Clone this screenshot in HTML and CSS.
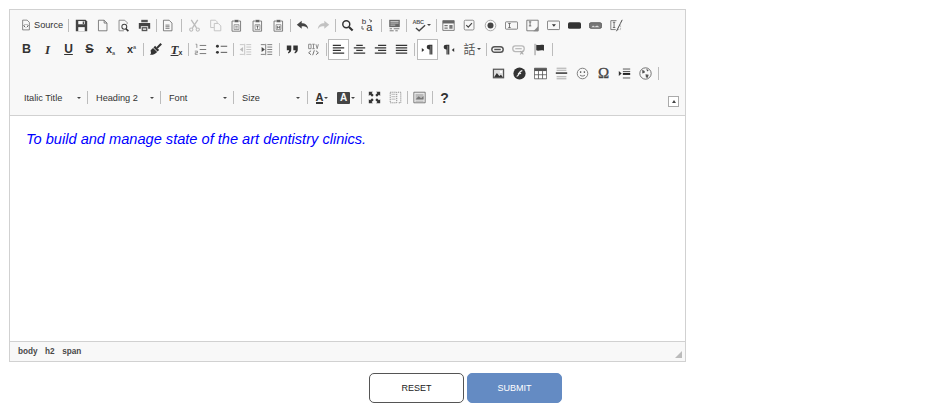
FILE: index.html
```html
<!DOCTYPE html>
<html lang="en">
<head>
<meta charset="utf-8">
<title>Editor</title>
<link rel="stylesheet" href="styles.css">
</head>
<body>
<svg class="defs" width="0" height="0" aria-hidden="true">
  <defs>
    <symbol id="source" viewBox="0 0 16 16"><path d="M3.500 1.500h6l3 3v10h-9z" fill="none" stroke="#666"/><path d="M7 7L5 9l2 2M9 7l2 2-2 2" fill="none" stroke="#333"/></symbol>
    <symbol id="save" viewBox="0 0 16 16"><path d="M1 1h12l2 2v12H1z" fill="#444"/><path d="M4 2.500h8v4H4z" fill="#f8f8f8"/><path d="M4 10h8v5H4z" fill="#f8f8f8"/><path d="M9.500 3H11v3H9.500z" fill="#444"/></symbol>
    <symbol id="new" viewBox="0 0 16 16"><path d="M3 1.500h7l3.500 3.500v9.500H3z M10 1.500V5h3.500" fill="none" stroke="#666"/></symbol>
    <symbol id="preview" viewBox="0 0 16 16"><path d="M12.500 6V4.500l-3-3h-7v13h6" fill="none" stroke="#777"/><circle cx="9" cy="9.500" r="3" fill="none" stroke="#444" stroke-width="1.300"/><path d="M11 12l3 3" stroke="#333" stroke-width="2"/></symbol>
    <symbol id="print" viewBox="0 0 16 16"><path d="M4 1h8v3H4z" fill="#555"/><path d="M1 5h14v7h-2.500V9h-9v3H1z" fill="#444"/><path d="M4.500 10h7v5h-7z" fill="#555"/><path d="M6 11.500h4v2H6z" fill="#ddd"/></symbol>
    <symbol id="templates" viewBox="0 0 16 16"><path d="M3 1.500h7l3.500 3.500v9.500H3z" fill="none" stroke="#666"/><path d="M5.500 7.500h5M5.500 9.500h5M5.500 11.500h5" stroke="#666"/></symbol>
    <symbol id="cut" viewBox="0 0 16 16"><g opacity=".3"><path d="M4 1l6.500 10M12 1L5.500 11" stroke="#333" stroke-width="1.600"/><circle cx="4" cy="13" r="2" fill="none" stroke="#333" stroke-width="1.300"/><circle cx="12" cy="13" r="2" fill="none" stroke="#333" stroke-width="1.300"/></g></symbol>
    <symbol id="copy" viewBox="0 0 16 16"><g opacity=".3" fill="none" stroke="#333"><path d="M2 1.500h6l2 2V5M2 1.500v9h4"/><path d="M6.500 5.500h5l3 3v6h-8z"/></g></symbol>
    <symbol id="paste" viewBox="0 0 16 16"><path d="M5 2.500H2.500V15H13V2.500h-2" fill="none" stroke="#666"/><path d="M5.500 1h5v3h-5z" fill="#666"/><path d="M5 7h6v6H5z" fill="none" stroke="#888"/><path d="M6.500 9h3M6.500 11h3" stroke="#777"/></symbol>
    <symbol id="pastetext" viewBox="0 0 16 16"><path d="M5 2.500H2.500V15H13V2.500h-2" fill="none" stroke="#666"/><path d="M5.500 1h5v3h-5z" fill="#666"/><path d="M5 7h6v6H5z" fill="none" stroke="#888"/><path d="M6.500 8.700h3M8 8.700V12" stroke="#555"/></symbol>
    <symbol id="pasteword" viewBox="0 0 16 16"><path d="M5 2.500H2.500V15H13V2.500h-2" fill="none" stroke="#666"/><path d="M5.500 1h5v3h-5z" fill="#666"/><path d="M5 7h6v6H5z" fill="none" stroke="#888"/><path d="M6.500 8.500V12M9.500 8.500V12M6.500 10.200h3" stroke="#555"/></symbol>
    <symbol id="undo" viewBox="0 0 16 16"><path d="M1 7l6-5v3.200c4.500 0 7.500 2.300 8 7.300-1.500-2.800-4-3.500-8-3.500V12z" fill="#444"/></symbol>
    <symbol id="redo" viewBox="0 0 16 16"><path d="M15 7L9 2v3.200c-4.500 0-7.500 2.300-8 7.300 1.500-2.800 4-3.500 8-3.500V12z" fill="#444" opacity=".3"/></symbol>
    <symbol id="find" viewBox="0 0 16 16"><circle cx="6.500" cy="6.500" r="4.300" fill="none" stroke="#333" stroke-width="1.800"/><path d="M9.800 9.800l4.500 4.500" stroke="#333" stroke-width="2.600"/></symbol>
    <symbol id="selectall" viewBox="0 0 16 16"><path d="M1.500 1h13v9h-13z" fill="#666"/><path d="M3 3h10M3 5h10M3 7.500h6" stroke="#ddd"/><path d="M2 12h3M7 12h7M2 14.500h5M9 14.500h3" stroke="#777" stroke-width="1.200"/></symbol>
    <symbol id="check" viewBox="0 0 16 16"><path d="M3 1.500h9A1.500 1.500 0 0 1 13.500 3v9a1.500 1.500 0 0 1-1.500 1.500H3A1.500 1.500 0 0 1 1.500 12V3A1.500 1.500 0 0 1 3 1.500z" fill="none" stroke="#777"/><path d="M4 7.500L6.500 10 11 5" fill="none" stroke="#444" stroke-width="1.400"/></symbol>
    <symbol id="form" viewBox="0 0 16 16"><path d="M1 2h14v12H1z" fill="none" stroke="#666"/><path d="M1 2h14v3.500H1z" fill="#666"/><path d="M3 7.500h4V9H3zM9 7.500h4V12H9zM3 10.500h4V12H3z" fill="#777"/></symbol>
    <symbol id="radio" viewBox="0 0 16 16"><circle cx="8" cy="8" r="6.500" fill="none" stroke="#999"/><circle cx="8" cy="8" r="3.700" fill="#444"/></symbol>
    <symbol id="textfield" viewBox="0 0 16 16"><rect x=".5" y="3.500" width="15" height="9" rx="1" fill="none" stroke="#666"/><path d="M4 5.500h3M4 10.500h3M5.500 5.500v5" stroke="#555"/></symbol>
    <symbol id="textarea" viewBox="0 0 16 16"><path d="M1 1.500h14v13H1z" fill="none" stroke="#666"/><path d="M3.500 3.500h3M3.500 8.500h3M5 3.500v5" stroke="#555"/><path d="M15 9v6H9z" fill="#888"/></symbol>
    <symbol id="select" viewBox="0 0 16 16"><rect x=".5" y="2.500" width="15" height="10.500" rx="1" fill="none" stroke="#666"/><path d="M6 6.500h5L8.500 9.500z" fill="#333"/></symbol>
    <symbol id="button" viewBox="0 0 16 16"><rect x="0" y="4" width="16" height="8" rx="2" fill="#333"/></symbol>
    <symbol id="imagebutton" viewBox="0 0 16 16"><rect x=".5" y="4.500" width="15" height="7" rx="2" fill="#777" stroke="#555"/><path d="M3 10l2-2 2 1.500L10 8l3 2" fill="#ddd"/></symbol>
    <symbol id="hidden" viewBox="0 0 16 16"><path d="M8 2H1v11h6" fill="none" stroke="#666"/><path d="M3.500 4h3M3.500 10.500h3M5 4v6.500" stroke="#555"/><path d="M15 1L8 15" stroke="#444" stroke-width="1.200"/><path d="M13 5v8h-3" fill="none" stroke="#999" stroke-dasharray="1 1"/></symbol>
    <symbol id="brush" viewBox="0 0 16 16"><path d="M10 6l5-5" stroke="#333" stroke-width="2.600"/><path d="M7.500 3.500l5 5-2 2-5-5z" fill="#333"/><path d="M5 6l5 5c-1.500 2-5 4-9 3.500 2.500-1.500 1-3 1-5.500z" fill="#333"/></symbol>
    <symbol id="ol" viewBox="0 0 16 16"><path d="M7 3h8M7 8h8M7 13h8" stroke="#777" stroke-width="1.200"/><path d="M2 1.500h1.500V6M1 10h3.300v2H1.500v2h3" fill="none" stroke="#777" stroke-width=".9"/></symbol>
    <symbol id="ul" viewBox="0 0 16 16"><path d="M7 4h8M7 11.500h8" stroke="#555" stroke-width="1.200"/><circle cx="3" cy="4" r="1.800" fill="#333"/><circle cx="3" cy="11.500" r="1.800" fill="#333"/></symbol>
    <symbol id="outdent" viewBox="0 0 16 16"><g opacity=".3"><path d="M9 2h6M9 5h6M9 8h6M9 11h6M9 14h6M1 2h5M1 14h5M7 1v14" stroke="#333"/><path d="M1 8l4-3v6z" fill="#333"/></g></symbol>
    <symbol id="indent" viewBox="0 0 16 16"><path d="M9 2h6M9 5h6M9 8h6M9 11h6M9 14h6M1 2h5M1 14h5M7 1v14" stroke="#666"/><path d="M6 8L2 5v6z" fill="#444"/></symbol>
    <symbol id="quote" viewBox="0 0 16 16"><path d="M1 3h5.500v5c0 2.500-1.500 4-3.500 5l-.7-1.300c1-.7 1.500-1.500 1.500-2.700H1zM9 3h5.500v5c0 2.500-1.500 4-3.500 5l-.7-1.300c1-.7 1.500-1.500 1.500-2.700H9z" fill="#333"/></symbol>
    <symbol id="div" viewBox="0 0 16 16"><path d="M2 1.500h3V7H2zM6.500 1.500h3M8 1.500V7M6.500 7h3M11 1.500L12.500 7 14 1.500" fill="none" stroke="#777"/><path d="M5 9.500L2 12l3 2.500M11 9.500l3 2.500-3 2.500M9 9l-2 6" fill="none" stroke="#555"/></symbol>
    <symbol id="aleft" viewBox="0 0 16 16"><path d="M1 3h10M1 6h14M1 9h10M1 12.500h14" stroke="#333" stroke-width="1.400"/></symbol>
    <symbol id="acenter" viewBox="0 0 16 16"><path d="M4 3h8M1 6h14M4 9h8M1 12.500h14" stroke="#333" stroke-width="1.400"/></symbol>
    <symbol id="aright" viewBox="0 0 16 16"><path d="M5 3h10M1 6h14M5 9h10M1 12.500h14" stroke="#333" stroke-width="1.400"/></symbol>
    <symbol id="ajust" viewBox="0 0 16 16"><path d="M1 3h14M1 6h14M1 9h14M1 12.500h14" stroke="#333" stroke-width="1.400"/></symbol>
    <symbol id="ltr" viewBox="0 0 16 16"><path d="M1 6l3 2.500L1 11z" fill="#333"/><path d="M14 2H10a3 3 0 0 0 0 6h.5v6H12V3.500h.500V14H14z" fill="#333"/></symbol>
    <symbol id="rtl" viewBox="0 0 16 16"><path d="M15 6l-3 2.500 3 2.500z" fill="#333"/><path d="M9 2H5a3 3 0 0 0 0 6h.5v6H7V3.500h.500V14H9z" fill="#333"/></symbol>
    <symbol id="link" viewBox="0 0 16 16"><rect x="1" y="4.500" width="14" height="7" rx="3.500" fill="none" stroke="#555" stroke-width="1.800"/><path d="M4 8h8" stroke="#555" stroke-width="1.800"/></symbol>
    <symbol id="unlink" viewBox="0 0 16 16"><g opacity=".35"><rect x="1" y="3.500" width="14" height="7" rx="3" fill="none" stroke="#444" stroke-width="1.600"/><path d="M4 7h8" stroke="#444" stroke-width="1.500"/></g><path d="M10 10l4 4M14 10l-4 4" stroke="#aaa" stroke-width="1.300"/></symbol>
    <symbol id="anchor" viewBox="0 0 16 16"><path d="M2.500 1v14" stroke="#777"/><path d="M4 2c3 1.500 5-1 9.500.5v7C9 8 7 10.500 4 9z" fill="#333"/></symbol>
    <symbol id="image" viewBox="0 0 16 16"><path d="M1 2h14v12H1z" fill="#555"/><path d="M2.500 3.500h11v9h-11z" fill="#ddd"/><circle cx="11" cy="6" r="1.500" fill="#fff"/><path d="M2.500 12.500l3.500-5 3 3.500 2-1.500 2.500 3z" fill="#333"/></symbol>
    <symbol id="flash" viewBox="0 0 16 16"><circle cx="8" cy="8" r="7.500" fill="#333"/><path d="M4.500 11.500c3 0 2.500-7 7-7" fill="none" stroke="#eee" stroke-width="1.700"/><path d="M6 8h4" stroke="#eee" stroke-width="1.500"/></symbol>
    <symbol id="table" viewBox="0 0 16 16"><path d="M.5 1.500h15v13H.5z" fill="#fff" stroke="#555"/><path d="M.5 1.500h15V5H.5z" fill="#555"/><path d="M.5 9.500h15M5.500 5v9.500M10.500 5v9.500" stroke="#555"/></symbol>
    <symbol id="hr" viewBox="0 0 16 16"><path d="M2 1.500h12M2 4h12M2 12h12M2 14.500h12" stroke="#999"/><path d="M1 7.500h14" stroke="#444" stroke-width="2"/></symbol>
    <symbol id="smiley" viewBox="0 0 16 16"><circle cx="8" cy="8" r="6.500" fill="none" stroke="#666"/><circle cx="5.700" cy="6.300" r="1" fill="#444"/><circle cx="10.300" cy="6.300" r="1" fill="#444"/><path d="M5 10c1.500 1.500 4.500 1.500 6 0" fill="none" stroke="#555"/></symbol>
    <symbol id="pagebreak" viewBox="0 0 16 16"><path d="M1 5l3.500 3L1 11z" fill="#333"/><path d="M6 2.500h9M6 5.500h9M6 13.500h9" stroke="#555" stroke-width="1.200"/><path d="M6 8.500h9" stroke="#222" stroke-width="2.500"/></symbol>
    <symbol id="iframe" viewBox="0 0 16 16"><circle cx="8" cy="8" r="7" fill="none" stroke="#555"/><path d="M4 3.500L7 5v2l-3 1zM8 9l4 .5-1.500 4-2-1zM9 2l3 2-2 1.500z" fill="#555"/></symbol>
    <symbol id="blocks" viewBox="0 0 16 16"><path d="M1.500 1.500h8v13h-8zM11 1.500h3.500v13H11" fill="none" stroke="#777" stroke-dasharray="1.500 1"/><path d="M3 4h5M3 7h5M3 10h5" stroke="#aaa"/></symbol>
    <symbol id="showimg" viewBox="0 0 16 16"><path d="M1 1.500h14v13H1z" fill="#eee" stroke="#666"/><path d="M3 3.500h10v7H3z" fill="#bbb"/><path d="M3 10.500l4-4L10 9l3-3v4.500z" fill="#777"/><path d="M3 12.500h10" stroke="#999"/></symbol>
    <symbol id="maximize" viewBox="0 0 16 16"><path d="M1 1h5L4.500 2.500 7 5 5 7 2.500 4.500 1 6zM15 1v5l-1.500-1.500L11 7 9 5l2.500-2.500L10 1zM1 15v-5l1.500 1.500L5 9l2 2-2.500 2.500L6 15zM15 15h-5l1.500-1.500L9 11l2-2 2.500 2.500L15 10z" fill="#333"/></symbol>
  </defs>
</svg>

<main class="page">
  <section class="editor">
    <div class="toolbar">
      <div class="row">
        <span class="btn btn-source"><svg class="ico"><use href="#source"/></svg><span class="label">Source</span></span>
        <i class="sep w-5"></i>
        <span class="btn"><svg class="ico"><use href="#save"/></svg></span>
        <span class="btn"><svg class="ico"><use href="#new"/></svg></span>
        <span class="btn"><svg class="ico"><use href="#preview"/></svg></span>
        <span class="btn"><svg class="ico"><use href="#print"/></svg></span>
        <i class="sep w-2"></i>
        <span class="btn"><svg class="ico"><use href="#templates"/></svg></span>
        <i class="sep w-6"></i>
        <span class="btn"><svg class="ico"><use href="#cut"/></svg></span>
        <span class="btn"><svg class="ico"><use href="#copy"/></svg></span>
        <span class="btn"><svg class="ico"><use href="#paste"/></svg></span>
        <span class="btn"><svg class="ico"><use href="#pastetext"/></svg></span>
        <span class="btn"><svg class="ico"><use href="#pasteword"/></svg></span>
        <i class="sep w-3"></i>
        <span class="btn"><svg class="ico"><use href="#undo"/></svg></span>
        <span class="btn"><svg class="ico"><use href="#redo"/></svg></span>
        <i class="sep w-3"></i>
        <span class="btn"><svg class="ico"><use href="#find"/></svg></span>
        <span class="btn btn-replace"><span class="rep-b">b</span><span class="rep-a">a</span><svg class="rep-arrows" viewBox="0 0 14 14"><path d="M8 1.500l3 1.500-2 1M1 8v3h2" fill="none" stroke="#666"/></svg></span>
        <i class="sep w-5"></i>
        <span class="btn"><svg class="ico"><use href="#selectall"/></svg></span>
        <i class="sep w-3"></i>
        <span class="btn btn-menu btn-spell"><span class="spell"><span class="spell-t">ABC</span><svg class="tick" viewBox="0 0 12 8"><path d="M1 4l3.500 3L11 1" fill="none" stroke="#444" stroke-width="1.500"/></svg></span><span class="caret"></span></span>
        <i class="sep w-3"></i>
        <span class="btn"><svg class="ico"><use href="#form"/></svg></span>
        <span class="btn"><svg class="ico"><use href="#check"/></svg></span>
        <span class="btn"><svg class="ico"><use href="#radio"/></svg></span>
        <span class="btn"><svg class="ico"><use href="#textfield"/></svg></span>
        <span class="btn"><svg class="ico"><use href="#textarea"/></svg></span>
        <span class="btn"><svg class="ico"><use href="#select"/></svg></span>
        <span class="btn"><svg class="ico"><use href="#button"/></svg></span>
        <span class="btn"><svg class="ico"><use href="#imagebutton"/></svg></span>
        <span class="btn"><svg class="ico"><use href="#hidden"/></svg></span>
      </div>
      <div class="row">
        <span class="btn txt t-b">B</span>
        <span class="btn txt t-i">I</span>
        <span class="btn txt t-u">U</span>
        <span class="btn txt t-s">S</span>
        <span class="btn txt t-x"><span>x<sub>a</sub></span></span>
        <span class="btn txt t-x"><span>x<sup>a</sup></span></span>
        <i class="sep w-3"></i>
        <span class="btn"><svg class="ico"><use href="#brush"/></svg></span>
        <span class="btn txt t-rm"><span><span class="t-rm-t">T</span><sub>x</sub></span></span>
        <i class="sep w-3"></i>
        <span class="btn"><svg class="ico"><use href="#ol"/></svg></span>
        <span class="btn"><svg class="ico"><use href="#ul"/></svg></span>
        <i class="sep w-3"></i>
        <span class="btn"><svg class="ico"><use href="#outdent"/></svg></span>
        <span class="btn"><svg class="ico"><use href="#indent"/></svg></span>
        <i class="sep w-5"></i>
        <span class="btn"><svg class="ico"><use href="#quote"/></svg></span>
        <span class="btn"><svg class="ico"><use href="#div"/></svg></span>
        <i class="sep w-4"></i>
        <span class="btn on"><svg class="ico"><use href="#aleft"/></svg></span>
        <span class="btn"><svg class="ico"><use href="#acenter"/></svg></span>
        <span class="btn"><svg class="ico"><use href="#aright"/></svg></span>
        <span class="btn"><svg class="ico"><use href="#ajust"/></svg></span>
        <i class="sep w-5"></i>
        <span class="btn on"><svg class="ico"><use href="#ltr"/></svg></span>
        <span class="btn"><svg class="ico"><use href="#rtl"/></svg></span>
        <span class="btn btn-menu"><span class="lang">話</span><span class="caret"></span></span>
        <i class="sep w-2"></i>
        <span class="btn"><svg class="ico"><use href="#link"/></svg></span>
        <span class="btn"><svg class="ico"><use href="#unlink"/></svg></span>
        <span class="btn"><svg class="ico"><use href="#anchor"/></svg></span>
        <i class="sep w-5"></i>
      </div>
      <div class="row row-insert">
        <span class="btn"><svg class="ico"><use href="#image"/></svg></span>
        <span class="btn"><svg class="ico"><use href="#flash"/></svg></span>
        <span class="btn"><svg class="ico"><use href="#table"/></svg></span>
        <span class="btn"><svg class="ico"><use href="#hr"/></svg></span>
        <span class="btn"><svg class="ico"><use href="#smiley"/></svg></span>
        <span class="btn txt t-omega">Ω</span>
        <span class="btn"><svg class="ico"><use href="#pagebreak"/></svg></span>
        <span class="btn"><svg class="ico"><use href="#iframe"/></svg></span>
        <i class="sep w-5"></i>
      </div>
      <div class="row row-combos">
        <span class="combo combo-first"><span class="combo-label">Italic Title</span><span class="caret"></span></span>
        <i class="sep"></i>
        <span class="combo"><span class="combo-label">Heading 2</span><span class="caret"></span></span>
        <i class="sep"></i>
        <span class="combo"><span class="combo-label">Font</span><span class="caret"></span></span>
        <i class="sep"></i>
        <span class="combo"><span class="combo-label">Size</span><span class="caret"></span></span>
        <i class="sep w-5"></i>
        <span class="btn btn-menu btn-color"><span class="color-a">A</span><span class="caret"></span></span>
        <span class="btn btn-menu btn-color"><span class="color-bg">A</span><span class="caret"></span></span>
        <i class="sep w-6"></i>
        <span class="btn"><svg class="ico"><use href="#maximize"/></svg></span>
        <span class="btn"><svg class="ico"><use href="#blocks"/></svg></span>
        <i class="sep"></i>
        <span class="btn"><svg class="ico"><use href="#showimg"/></svg></span>
        <i class="sep w-4"></i>
        <span class="btn txt t-help">?</span>
      </div>
      <span class="collapser"></span>
    </div>
    <div class="content">
      <h2 class="title">To build and manage state of the art dentistry clinics.</h2>
    </div>
    <div class="status">
      <span class="crumb">body</span><span class="crumb">h2</span><span class="crumb">span</span>
      <span class="resizer"></span>
    </div>
  </section>
  <div class="actions">
    <button class="action action-reset" type="button">RESET</button>
    <button class="action action-submit" type="button">SUBMIT</button>
  </div>
</main>
</body>
</html>
```

FILE: styles.css
```css
* { box-sizing: border-box; }
html, body { margin: 0; padding: 0; background: #fff; }
body { font-family: "Liberation Sans", Arial, sans-serif; color: #333; }
.defs { position: absolute; }
.page { padding: 9px 0 0 9px; }

.editor {
  width: 677px;
  height: 353px;
  border: 1px solid #d1d1d1;
  display: flex;
  flex-direction: column;
}

.toolbar {
  position: relative;
  height: 106px;
  flex: none;
  padding: 3px 0 0 6px;
  background: #f8f8f8;
  border-bottom: 1px solid #d1d1d1;
}
.row { display: flex; align-items: center; height: 24px; }
.row-insert { padding-left: 472px; }
.row-combos { height: 25px; }

.btn {
  flex: none;
  width: 21px;
  height: 21px;
  display: flex;
  align-items: center;
  justify-content: center;
}
.btn.on { background: #fff; border: 1px solid #bcbcbc; }
.ico { width: 13px; height: 13px; display: block; }

.btn-source { width: 50px; justify-content: flex-start; padding-left: 4px; gap: 2px; }
.btn-source .ico { width: 12px; height: 12px; }
.label { font-size: 9.200px; color: #333; }

.btn-menu { width: 26px; gap: 1px; }
.btn-spell { width: 27px; }
.btn-color { width: 24px; }
.caret {
  display: inline-block;
  width: 0;
  height: 0;
  border-left: 2px solid transparent;
  border-right: 2px solid transparent;
  border-top: 2.500px solid #444;
}

.sep { flex: none; width: 3px; height: 13px; position: relative; display: block; }
.sep::after { content: ""; position: absolute; top: 0; bottom: 0; left: 50%; width: 1px; margin-left: -.5px; background: #bcbcbc; }
.w-2 { width: 2px; }
.w-3 { width: 3px; }
.w-4 { width: 4px; }
.w-5 { width: 5px; }
.w-6 { width: 6px; }

.txt { color: #333; line-height: 1; }
.t-b { font-weight: 700; font-size: 12.500px; }
.t-i { font-family: "Liberation Serif", serif; font-style: italic; font-weight: 700; font-size: 13px; }
.t-u { font-weight: 700; font-size: 12px; text-decoration: underline; }
.t-s { font-weight: 700; font-size: 12.500px; text-decoration: line-through; }
.t-x { font-weight: 700; font-size: 11px; }
.t-x sub, .t-x sup { font-size: 5.500px; font-weight: 400; line-height: 0; }
.t-x sub { vertical-align: -2px; }
.t-x sup { vertical-align: 4px; }
.t-rm-t { font-family: "Liberation Serif", serif; font-style: italic; font-weight: 700; font-size: 13px; text-decoration: underline; }
.t-rm sub { font-weight: 700; font-size: 7px; line-height: 0; vertical-align: -1px; }
.t-omega { font-family: "Liberation Serif", serif; font-size: 15px; color: #444; -webkit-text-stroke: .3px #444; }
.t-help { font-weight: 700; font-size: 14px; }

.btn-replace { position: relative; font-size: 9px; color: #333; }
.rep-b { font-size: 8px; margin: -7px 0 0 -3px; }
.rep-a { font-size: 11px; margin: 4px 0 0 0; }
.rep-arrows { position: absolute; left: 3px; top: 3px; width: 14px; height: 14px; }
.lang { font-family: "Noto Sans CJK TC", "Noto Sans CJK SC", sans-serif; font-size: 12px; line-height: 1; color: #555; }

.spell { position: relative; display: block; width: 13px; height: 13px; }
.spell-t { display: block; font-size: 5.500px; line-height: 6px; font-weight: 700; letter-spacing: -.2px; color: #555; }
.tick { position: absolute; left: 2px; bottom: 0; width: 11px; height: 8px; }

.combo {
  flex: none;
  width: 70px;
  height: 18px;
  padding: 0 5px 0 7px;
  display: flex;
  align-items: center;
  justify-content: space-between;
  font-size: 9.200px;
  color: #333;
}
.combo-first { padding-left: 8px; }
.combo-label { white-space: nowrap; }

.color-a { font-size: 11px; font-weight: 700; border-bottom: 2px solid #333; line-height: 10px; }
.color-bg { font-size: 10px; font-weight: 700; color: #f8f8f8; background: #444; padding: 0 2.500px; line-height: 12px; border-radius: 1px; }

.collapser {
  position: absolute;
  right: 6px;
  bottom: 8px;
  width: 11px;
  height: 11px;
  background: #fff;
  border: 1px solid #aaa;
}
.collapser::after {
  content: "";
  position: absolute;
  left: 2.500px;
  top: 3px;
  border-left: 2px solid transparent;
  border-right: 2px solid transparent;
  border-bottom: 3px solid #444;
}

.content { flex: 1; background: #fff; padding: 14px 16px; }
.title {
  margin: 0;
  font-size: 14.600px;
  line-height: 18px;
  font-weight: 400;
  font-style: italic;
  color: #00f;
}

.status {
  position: relative;
  flex: none;
  height: 20px;
  padding: 0 8px;
  display: flex;
  align-items: center;
  gap: 7.500px;
  background: #f8f8f8;
  border-top: 1px solid #d1d1d1;
}
.crumb { font-size: 8.200px; font-weight: 700; color: #484848; }
.resizer {
  position: absolute;
  right: 3px;
  bottom: 3px;
  width: 0;
  height: 0;
  border-left: 7px solid transparent;
  border-bottom: 7px solid #bbb;
}

.actions { display: flex; gap: 3px; padding: 11px 0 0 360px; }
.action {
  width: 95px;
  height: 30px;
  padding: 0;
  font-family: "Liberation Sans", Arial, sans-serif;
  font-size: 9px;
  border-radius: 5px;
}
.action-reset { background: #fff; border: 1px solid #555; color: #222; }
.action-submit { background: #648bc3; border: 1px solid #648bc3; color: #fff; }
```
